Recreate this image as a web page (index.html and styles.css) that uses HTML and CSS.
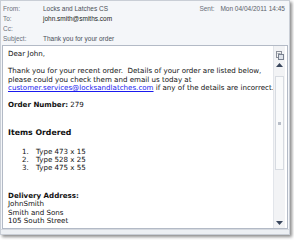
FILE: index.html
```html
<!DOCTYPE html>
<html lang="en">
<head>
    <meta charset="UTF-8">
    <title>Thank you for your order</title>
    <link rel="stylesheet" href="styles.css">
</head>
<body>
    <div class="window">
        <div class="header">
            <div class="row">
                <span class="label">From:</span>
                <span class="value">Locks and Latches CS</span>
                <span class="sent"><span class="label-inline">Sent:</span> Mon 04/04/2011 14:45</span>
            </div>
            <div class="row">
                <span class="label">To:</span>
                <span class="value strong">john.smith@smiths.com</span>
            </div>
            <div class="row">
                <span class="label">Cc:</span>
                <span class="value"></span>
            </div>
            <div class="row">
                <span class="label">Subject:</span>
                <span class="value">Thank you for your order</span>
            </div>
        </div>
        <div class="body-box">
            <div class="message">
                <p>Dear John,</p>
                <p>Thank you for your recent order.&nbsp; Details of your order are listed below,<br>please could you check them and email us today at<br><a href="#">customer.services@locksandlatches.com</a> if any of the details are incorrect.</p>
                <p><b>Order Number:</b> 279</p>
                <h3>Items Ordered</h3>
                <ol>
                    <li>Type 473 x 15</li>
                    <li>Type 528 x 25</li>
                    <li>Type 475 x 55</li>
                </ol>
                <p class="address"><b>Delivery Address:</b><br>JohnSmith<br>Smith and Sons<br>105 South Street</p>
            </div>
            <div class="scrollbar">
                <div class="sb-icon">
                    <svg width="9" height="9" viewBox="0 0 9 9">
                        <rect x="1.5" y="0.5" width="5" height="6" fill="#f4f4f4" stroke="#8a8f99"/>
                        <rect x="3.5" y="3.5" width="5" height="5" fill="#dfe3ea" stroke="#7a8290"/>
                        <path d="M2.5 2.5h3" stroke="#a0a6b0"/>
                    </svg>
                </div>
                <div class="sb-btn">
                    <svg width="7" height="4" viewBox="0 0 7 4"><path d="M0 4L3.5 0L7 4Z" fill="#39465c"/></svg>
                </div>
                <div class="sb-track">
                    <div class="sb-thumb"><span class="grip"></span></div>
                </div>
                <div class="sb-btn">
                    <svg width="7" height="4" viewBox="0 0 7 4"><path d="M0 0L3.5 4L7 0Z" fill="#39465c"/></svg>
                </div>
            </div>
        </div>
        <div class="footer"></div>
    </div>
</body>
</html>
```

FILE: styles.css
```css
* {
    margin: 0;
    padding: 0;
    box-sizing: border-box;
}

body {
    background: #ffffff;
    width: 294px;
    height: 240px;
    overflow: hidden;
}

.window {
    width: 290px;
    height: 235px;
    background: #f4f6f9;
    border: 1px solid #c9ced6;
    box-shadow: 2px 2px 3px rgba(0, 0, 0, 0.45);
    display: flex;
    flex-direction: column;
}

.header {
    padding: 3px 0 0 2px;
    height: 44px;
    font-family: "Liberation Sans", Arial, sans-serif;
    font-size: 6.5px;
    color: #555b66;
}

.row {
    display: flex;
    height: 10px;
    line-height: 10px;
}

.label {
    width: 40px;
    color: #6b707a;
}

.value {
    flex: 1;
    color: #4a4f58;
}

.value.strong {
    color: #1a1d22;
}

.sent {
    color: #5a6069;
    padding-right: 4px;
}

.label-inline {
    color: #6b707a;
    margin-right: 4px;
}

.body-box {
    margin: 0 0 0 1px;
    width: 286px;
    height: 184px;
    background: #ffffff;
    border: 1px solid #b3bac6;
    display: flex;
}

.message {
    flex: 1;
    padding: 4px 0 0 5px;
    font-family: "DejaVu Sans", Verdana, sans-serif;
    font-size: 7.1px;
    line-height: 8.7px;
    color: #111;
    overflow: hidden;
    white-space: nowrap;
}

.message p {
    margin-bottom: 8.2px;
}

.message a {
    color: #1a1aee;
}

.message h3 {
    font-size: 7.8px;
    line-height: 10px;
    margin: 18px 0 10px;
}

.message ol {
    padding-left: 23px;
    margin-bottom: 19px;
    line-height: 8.2px;
}

.message ol li {
    padding-left: 5px;
}

.address {
    line-height: 8.6px;
}

.scrollbar {
    width: 12px;
    margin-right: 2px;
    display: flex;
    flex-direction: column;
    background: #f2f3f5;
    border-left: 1px solid #e2e5ea;
}

.sb-icon {
    height: 14px;
    display: flex;
    justify-content: center;
    align-items: flex-end;
}

.sb-btn {
    height: 10px;
    display: flex;
    justify-content: center;
    align-items: center;
}

.sb-track {
    flex: 1;
    padding: 6px 1px 48px;
}

.sb-thumb {
    height: 100%;
    background: #f9fafb;
    border: 1px solid #d7dbe1;
    display: flex;
    justify-content: center;
    align-items: center;
}

.grip {
    width: 3px;
    height: 3px;
    background: #b8bec8;
}

.footer {
    flex: 1;
    background: #eceff3;
    border-top: 1px solid #d5d9df;
}
```
